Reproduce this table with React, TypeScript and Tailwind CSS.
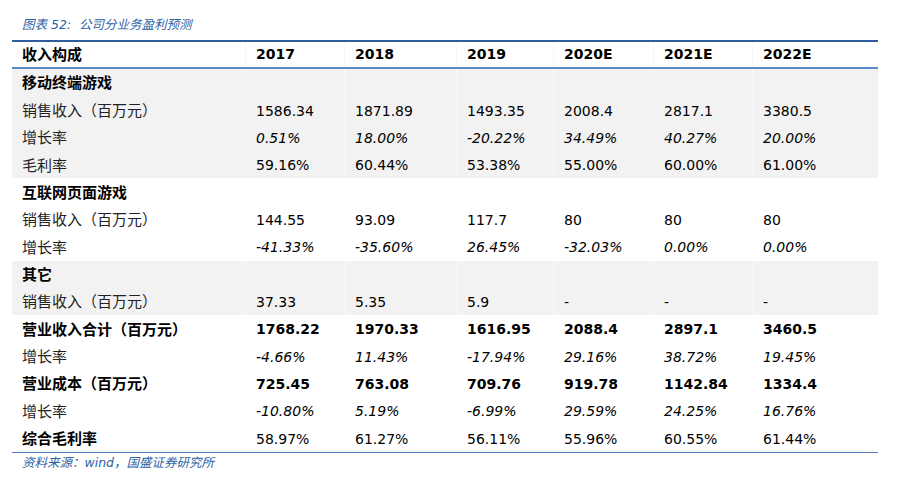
import React from 'react';

type Row = {
  label: string;
  values?: string[];
  kind: 'section' | 'plain' | 'italic' | 'bold' | 'total';
  shaded?: boolean;
};

const rows: Row[] = [
  { label: '移动终端游戏', kind: 'section', shaded: true },
  { label: '销售收入（百万元）', kind: 'plain', shaded: true, values: ['1586.34', '1871.89', '1493.35', '2008.4', '2817.1', '3380.5'] },
  { label: '增长率', kind: 'italic', shaded: true, values: ['0.51%', '18.00%', '-20.22%', '34.49%', '40.27%', '20.00%'] },
  { label: '毛利率', kind: 'plain', shaded: true, values: ['59.16%', '60.44%', '53.38%', '55.00%', '60.00%', '61.00%'] },
  { label: '互联网页面游戏', kind: 'section' },
  { label: '销售收入（百万元）', kind: 'plain', values: ['144.55', '93.09', '117.7', '80', '80', '80'] },
  { label: '增长率', kind: 'italic', values: ['-41.33%', '-35.60%', '26.45%', '-32.03%', '0.00%', '0.00%'] },
  { label: '其它', kind: 'section', shaded: true },
  { label: '销售收入（百万元）', kind: 'plain', shaded: true, values: ['37.33', '5.35', '5.9', '-', '-', '-'] },
  { label: '营业收入合计（百万元）', kind: 'bold', values: ['1768.22', '1970.33', '1616.95', '2088.4', '2897.1', '3460.5'] },
  { label: '增长率', kind: 'italic', values: ['-4.66%', '11.43%', '-17.94%', '29.16%', '38.72%', '19.45%'] },
  { label: '营业成本（百万元）', kind: 'bold', values: ['725.45', '763.08', '709.76', '919.78', '1142.84', '1334.4'] },
  { label: '增长率', kind: 'italic', values: ['-10.80%', '5.19%', '-6.99%', '29.59%', '24.25%', '16.76%'] },
  { label: '综合毛利率', kind: 'total', values: ['58.97%', '61.27%', '56.11%', '55.96%', '60.55%', '61.44%'] },
];

const years = ['2017', '2018', '2019', '2020E', '2021E', '2022E'];

const grid = 'grid grid-cols-[233px_99px_112px_97px_100px_99px_126px]';

// full-width brackets keep a whole em, like the source document
function Label({ text }: { text: string }) {
  return (
    <>
      {text.split(/([（）])/).map((part, i) =>
        part === '（' ? (
          <span key={i} className="inline-block w-[1em] text-right">（</span>
        ) : part === '）' ? (
          <span key={i} className="inline-block w-[1em] text-left">）</span>
        ) : (
          <span key={i}>{part}</span>
        )
      )}
    </>
  );
}

export default function App() {
  return (
    <div className="w-[899px] h-[482px] bg-white text-black font-['DejaVu_Sans','Noto_Sans_CJK_SC',sans-serif]">
      <div className="h-[40px] pl-[22px] pt-[17px] text-[12.5px] leading-[16px] italic text-[#2e5fa5]">
        图表 52:&nbsp; 公司分业务盈利预测
      </div>

      <div className="ml-[12px] w-[866px]">
        <div className={`${grid} h-[29px] items-center border-t-2 border-b-2 border-t-[#2f5e9e] border-b-[#5a88c8]`}>
          <div className="pl-[10px] text-[15px] font-bold font-['Noto_Sans_CJK_SC',sans-serif]">收入构成</div>
          {years.map((y) => (
            <div key={y} className="pl-[10px] text-[14px] font-bold border-l border-[#f6f6f6] h-full flex items-center">
              {y}
            </div>
          ))}
        </div>

        {rows.map((r, i) => (
          <div
            key={i}
            className={`${grid} h-[27.36px] items-center ${r.shaded ? 'bg-[#f2f2f2]' : 'bg-white'}`}
          >
            <div
              className={`pl-[10px] text-[15px] whitespace-nowrap font-['Noto_Sans_CJK_SC',sans-serif] ${
                r.kind === 'section' || r.kind === 'bold' || r.kind === 'total' ? 'font-bold' : 'font-normal text-[#222]'
              }`}
            >
              <Label text={r.label} />
            </div>
            {years.map((_, j) => (
              <div
                key={j}
                className={`pl-[10px] h-full flex items-center pt-[2px] text-[14px] border-l ${
                  r.shaded ? 'border-[#f7f7f7]' : 'border-transparent'
                } ${r.kind === 'italic' ? 'italic' : ''} ${r.kind === 'bold' ? 'font-bold' : ''}`}
              >
                {r.values ? r.values[j] : ''}
              </div>
            ))}
          </div>
        ))}

        <div className="border-t border-[#4f7fc0]" />
      </div>

      <div className="pl-[22px] pt-[2px] text-[12.5px] leading-[16px] italic text-[#2e5fa5]">
        资料来源：wind，国盛证券研究所
      </div>
    </div>
  );
}
